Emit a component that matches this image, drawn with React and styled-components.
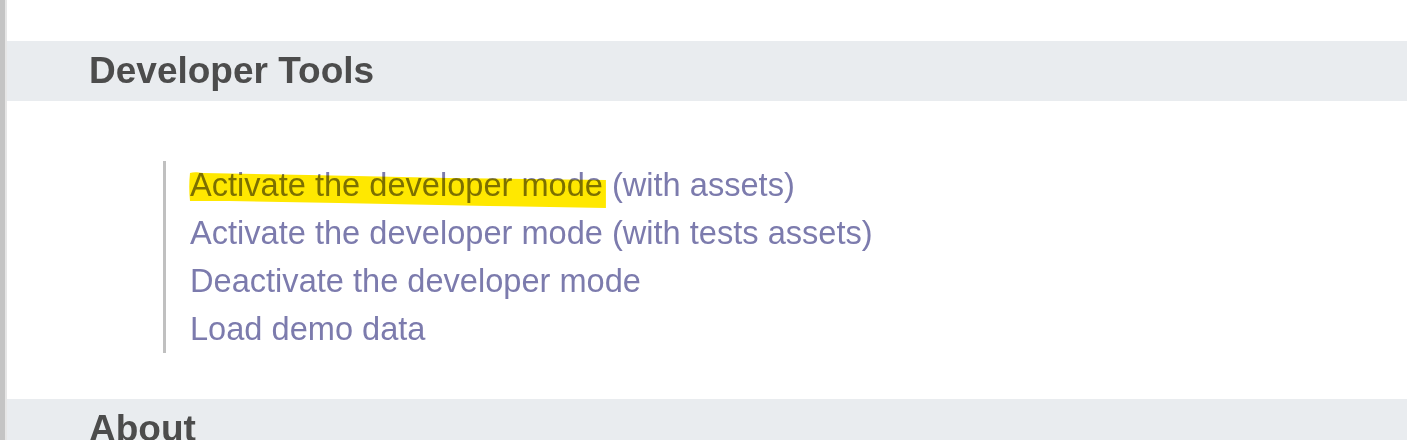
import React from 'react'
import styled, { createGlobalStyle } from 'styled-components'

const GlobalStyle = createGlobalStyle`
  html, body {
    margin: 0;
    padding: 0;
    background: #ffffff;
  }
`

const Page = styled.div`
  display: flex;
  height: 440px;
  overflow: hidden;
  font-family: "Liberation Sans", Arial, sans-serif;
`

const Edge = styled.div`
  width: 5px;
  background-color: #c4c4c4;
  border-right: 2px solid #e6e6e6;
  flex-shrink: 0;
`

const Main = styled.div`
  flex: 1;
  background-color: #ffffff;
  padding-top: 41px;
`

const SectionHeader = styled.h2`
  margin: 0;
  height: 60px;
  line-height: 60px;
  padding-left: 82px;
  background-color: #e9ecef;
  color: #4c4c4c;
  font-size: 37px;
  font-weight: bold;
`

const LinkList = styled.ul`
  list-style: none;
  margin: 60px 0 46px 156px;
  padding: 0 0 0 24px;
  border-left: 3px solid #c0c0c0;
`

const Item = styled.li`
  font-size: 32.6px;
  line-height: 48px;
  color: #7c7bad;
  white-space: nowrap;
`

const Link = styled.a`
  color: inherit;
  text-decoration: none;
  cursor: pointer;
`

const Marked = styled.span`
  position: relative;

  svg {
    position: absolute;
    left: -1px;
    top: 6px;
    width: calc(100% + 6px);
    height: 36px;
    mix-blend-mode: multiply;
    pointer-events: none;
  }
`

const Highlight = () => (
  <svg viewBox="0 0 420 36" preserveAspectRatio="none">
    <path
      d="M1 1 C4 0 8 0 14 1 L120 3 L260 6 L418 8 L418 36 L300 34 L150 31 L40 29 L1 29 C0 20 0 10 1 1 Z"
      fill="#ffe800"
    />
  </svg>
)

const links = [
  { marked: 'Activate the developer mode', rest: ' (with assets)' },
  { rest: 'Activate the developer mode (with tests assets)' },
  { rest: 'Deactivate the developer mode' },
  { rest: 'Load demo data' },
]

const App = () => (
  <Page>
    <GlobalStyle />
    <Edge />
    <Main>
      <SectionHeader>Developer Tools</SectionHeader>
      <LinkList>
        {links.map((link, i) => (
          <Item key={i}>
            <Link>
              {link.marked && (
                <Marked>
                  {link.marked}
                  <Highlight />
                </Marked>
              )}
              {link.rest}
            </Link>
          </Item>
        ))}
      </LinkList>
      <SectionHeader>About</SectionHeader>
    </Main>
  </Page>
)

export default App
